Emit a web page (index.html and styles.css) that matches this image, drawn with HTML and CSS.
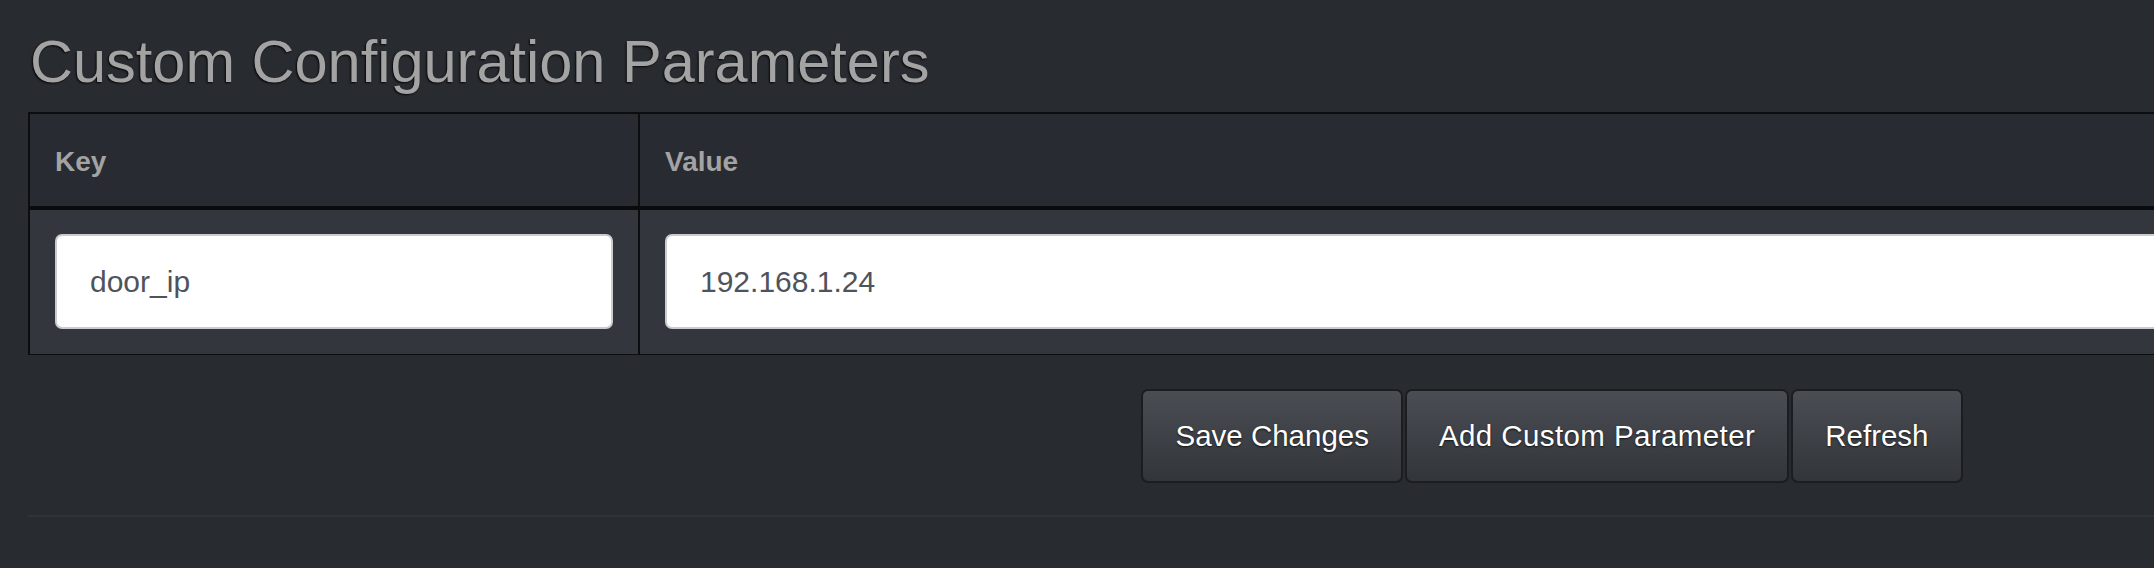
FILE: index.html
```html
<!DOCTYPE html>
<html lang="en">
<head>
<meta charset="utf-8">
<title>Custom Configuration Parameters</title>
<link rel="stylesheet" href="styles.css">
</head>
<body>
<div class="page">
  <h1 class="title">Custom Configuration Parameters</h1>
  <table class="params">
    <thead>
      <tr>
        <th class="col-key">Key</th>
        <th class="col-value">Value</th>
      </tr>
    </thead>
    <tbody>
      <tr>
        <td class="col-key"><input class="field" type="text" value="door_ip"></td>
        <td class="col-value"><input class="field" type="text" value="192.168.1.24"></td>
      </tr>
    </tbody>
  </table>
  <div class="actions">
    <button class="btn" type="button">Save Changes</button>
    <button class="btn btn-wide" type="button">Add Custom Parameter</button>
    <button class="btn" type="button">Refresh</button>
  </div>
  <div class="divider"></div>
</div>
</body>
</html>
```
FILE: styles.css
```css
html, body {
  margin: 0;
  padding: 0;
  background: #282b30;
  overflow: hidden;
  font-family: "Liberation Sans", Arial, Helvetica, sans-serif;
}

.page {
  width: 3048px;
  padding: 26px 0 0 28px;
}

.title {
  margin: 0 0 15px 2px;
  font-size: 59.5px;
  line-height: 71px;
  font-weight: 400;
  color: #a3a3a3;
  text-shadow: -1px 1px 2px rgba(0, 0, 0, 0.85);
}

.params {
  width: 100%;
  border-collapse: collapse;
  border: 2px solid #0c0d0f;
  border-bottom-width: 1px;
}

.params th {
  background: #282b31;
  color: #a3a3a3;
  font-size: 28px;
  font-weight: 700;
  text-align: left;
  line-height: 42px;
  padding: 27px 25px 23px;
  border-bottom: 4px solid #0a0b0d;
}

.params td {
  background: #33363c;
  padding: 24px 25px 25px;
}

.col-key {
  width: 558px;
  border-right: 2px solid #0c0d0f;
}

.field {
  display: block;
  box-sizing: border-box;
  width: 100%;
  height: 95px;
  margin: 0;
  padding: 0 33px;
  border: 2px solid #c9cdd2;
  border-radius: 7px;
  background: #ffffff;
  color: #4f535a;
  font-family: "Liberation Sans", Arial, Helvetica, sans-serif;
  font-size: 30px;
  outline: none;
}

.actions {
  display: flex;
  justify-content: center;
  gap: 2px;
  margin-top: 34px;
}

.btn {
  box-sizing: border-box;
  height: 94px;
  padding: 0 32px;
  border: 2px solid #1b1d20;
  border-radius: 7px;
  background: linear-gradient(to bottom, #4a4d53, #32353a);
  color: #ffffff;
  font-family: "Liberation Sans", Arial, Helvetica, sans-serif;
  font-size: 29.5px;
  text-shadow: 0 1px 2px rgba(0, 0, 0, 0.7);
}

.btn-wide {
  letter-spacing: 0.4px;
}

.divider {
  margin-top: 32px;
  height: 2px;
  background: #303338;
}
```
